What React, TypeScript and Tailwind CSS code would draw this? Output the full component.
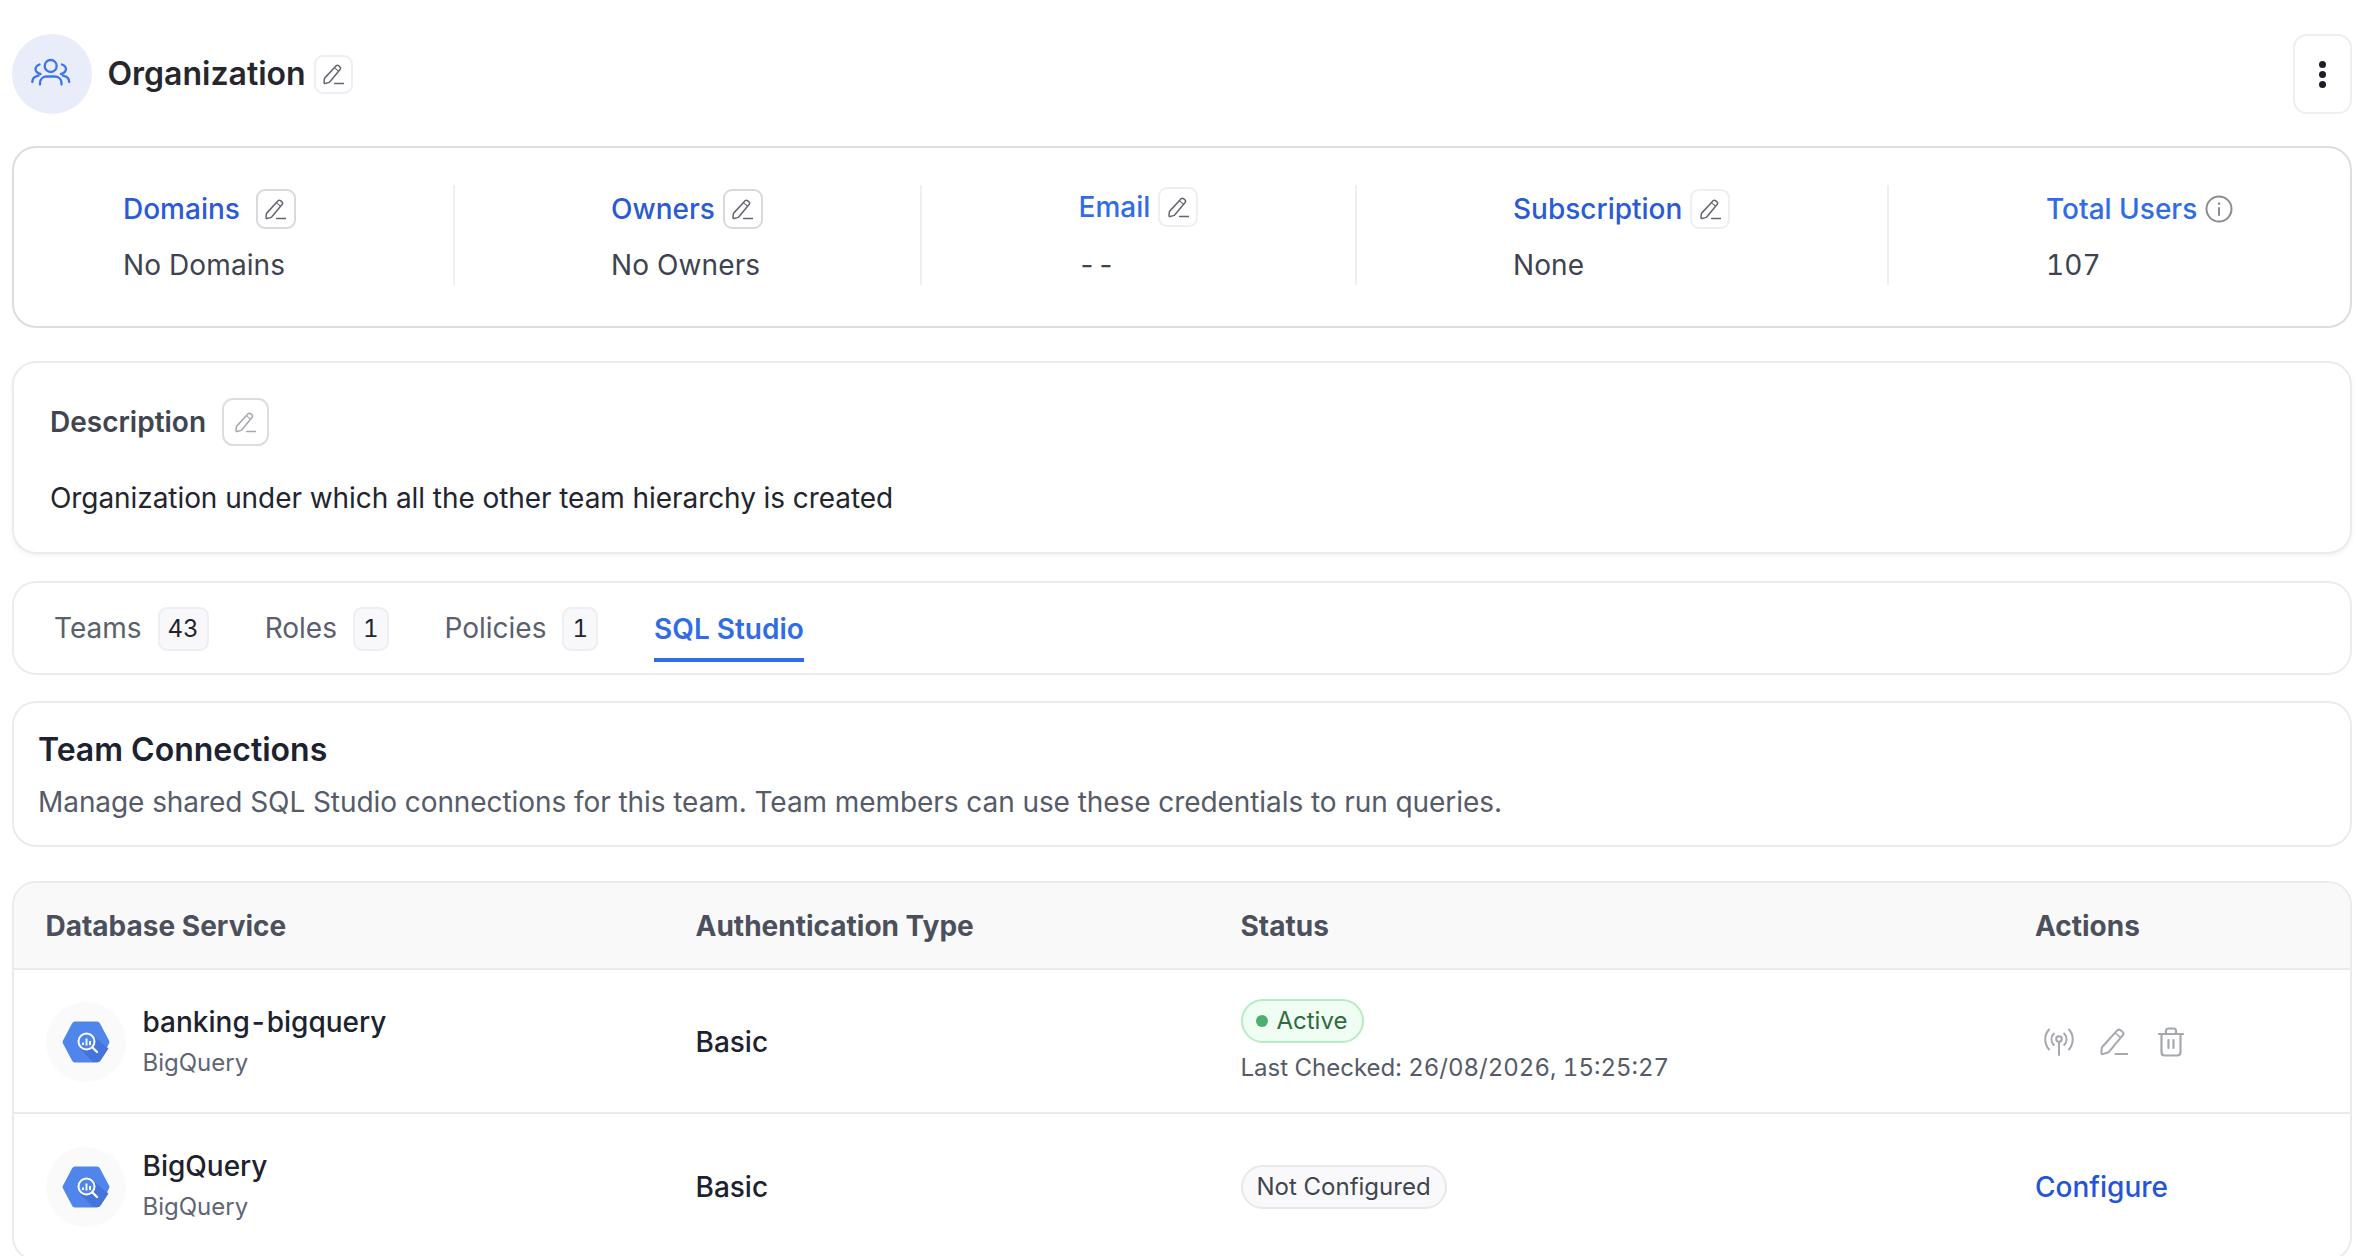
const FONT = "font-['Inter','Liberation_Sans',sans-serif]"

function PencilIcon({ className }: { className?: string }) {
  return (
    <svg viewBox="0 0 28 28" fill="none" stroke="currentColor" strokeWidth="2" strokeLinecap="round" strokeLinejoin="round" className={className}>
      <path d="M17.5 2.2q1.6-1.2 3.1 0l2 1.7q1.5 1.4.4 3L9.2 23.6q-.8.9-1.9 1.2l-4.6 1.3q-1.5.2-1.3-1.3l.3-4.3q.1-1.2.9-2Z" />
      <path d="M15 4.8l5.6 4.8" strokeWidth="1.4" />
      <path d="M15.5 26h12" />
    </svg>
  )
}

function EditButton({ className }: { className: string }) {
  return (
    <div className={`flex items-center justify-center rounded-[9px] border-2 bg-white ${className}`}>
      <PencilIcon className="h-[21px] w-[21px]" />
    </div>
  )
}

function PeopleIcon() {
  return (
    <svg viewBox="0 0 38 26" fill="none" stroke="#3b74ee" strokeWidth="2.300" strokeLinecap="round" className="mb-[4px] mr-[2px] h-[26px] w-[38px] overflow-visible">
      <circle cx="18.700" cy="7" r="6" />
      <path d="M8 25.500v-1.500c0-3.800 3-6.500 7-6.500h7.500c4 0 7 2.700 7 6.500v1.500" />
      <path d="M7.500 5.500C5 6.500 3.500 8.500 3.500 10.300S5.500 14.500 8.500 15" />
      <path d="M30 5.500c2.500 1 4 3 4 4.800S32 14.500 29 15" />
      <path d="M.3 23c0-3 2-5.500 6.200-6.300" />
      <path d="M37.200 23c0-3-2-5.500-6.200-6.300" />
    </svg>
  )
}

function InfoIcon() {
  return (
    <svg viewBox="0 0 28 28" fill="none" stroke="#8b8d93" strokeWidth="2" strokeLinecap="round" className="h-[28px] w-[28px]">
      <circle cx="14" cy="14" r="12.500" />
      <path d="M14 13v7" />
      <path d="M14 8.500v.3" strokeWidth="2.400" />
    </svg>
  )
}

function AntennaIcon() {
  return (
    <svg viewBox="0 0 30 28" fill="none" stroke="#a5a8b0" strokeWidth="2" strokeLinecap="round" className="h-[28px] w-[30px]">
      <circle cx="15" cy="11" r="2.800" />
      <path d="M15 14v13" />
      <path d="M9.800 5.500c-3 3.300-3 8 0 11.500" />
      <path d="M20.200 5.500c3 3.300 3 8 0 11.500" />
      <path d="M5 1.500c-5 5.500-5 14 0 20" />
      <path d="M25 1.500c5 5.500 5 14 0 20" />
    </svg>
  )
}

function TrashIcon() {
  return (
    <svg viewBox="0 0 26 30" fill="none" stroke="#a5a8b0" strokeWidth="2.200" strokeLinecap="round" strokeLinejoin="round" className="h-[30px] w-[26px]">
      <path d="M1 7h24" />
      <path d="M8 7V4q0-2.500 2.500-2.500h5Q18 1.500 18 4v3" />
      <path d="M3.500 7v18q0 3.500 3.500 3.500h12q3.500 0 3.500-3.500V7" />
      <path d="M10.500 13v8M15.500 13v8" />
    </svg>
  )
}

function BigQueryIcon() {
  return (
    <div className="flex h-[80px] w-[80px] shrink-0 items-center justify-center rounded-full bg-[#fafafa]">
      <svg viewBox="0 0 48 42" className="h-[42px] w-[48px]">
        <path d="M1 19.500 10 2.500Q11 .5 13 .5h22q2 0 3 2l9 17q1 1.500 0 3l-9 17q-1 2-3 2H13q-2 0-3-2l-9-17q-1-1.500 0-3Z" fill="#5086ec" />
        <path d="M31 15 46.500 27.500 39 39q-1 2-3 2h-5L18 28Z" fill="#4474db" />
        <circle cx="24.500" cy="20.500" r="8" fill="#5086ec" stroke="#fff" strokeWidth="2" />
        <path d="M30.500 26.500 35 31" stroke="#fff" strokeWidth="2.400" strokeLinecap="round" />
        <path d="M21 21.500v2.500M24.500 17.500v7M28 20v4" stroke="#fff" strokeWidth="1.900" />
      </svg>
    </div>
  )
}

function StatColumn({
  label,
  value,
  width,
  padding,
  edit,
  gap = "gap-[8px]",
  divider = true,
  raised = false,
  labelColor = "text-[#2a5bd7]",
  valueClass = "",
}: {
  label: string
  value: string
  width: string
  padding: string
  edit?: string
  gap?: string
  divider?: boolean
  raised?: boolean
  labelColor?: string
  valueClass?: string
}) {
  return (
    <div className={`h-[100px] shrink-0 ${width} ${padding} ${divider ? "border-r-2 border-[#eeeef3]" : ""}`}>
      <div className={`flex h-[40px] items-center ${gap} ${raised ? "mt-[2px] mb-[18px]" : "mt-[4px] mb-[16px]"}`}>
        <span className={`text-[28px] font-medium leading-[40px] ${labelColor}`}>{label}</span>
        {edit && <EditButton className={`h-[40px] w-[40px] text-[#63666e] ${edit}`} />}
        {label === "Total Users" && <InfoIcon />}
      </div>
      <div className={`text-[28px] leading-[40px] tracking-[0.1px] text-[#3d4350] ${valueClass}`}>{value}</div>
    </div>
  )
}

function TabLabel({ label, count }: { label: string; count: string }) {
  return (
    <div className="flex h-[44px] items-center gap-[16px]">
      <span className="mb-[2px] text-[28px] text-[#5b606c]">{label}</span>
      <span className="flex h-[44px] min-w-[35px] items-center justify-center rounded-[9px] border-2 border-[#eeeef3] bg-[#f8f8fa] px-[8px] text-[24px] tabular-nums text-[#20242e]">
        {count}
      </span>
    </div>
  )
}

const rowClass = "grid grid-cols-[650px_545px_794.500px_1fr] items-center pl-[31.500px]"

export default function App() {
  return (
    <div className={`h-[1256px] overflow-hidden bg-white pl-[12px] pr-[26px] pt-[34px] ${FONT}`}>
      <div className="flex h-[80px] items-center justify-between">
        <div className="flex items-center">
          <div className="flex h-[80px] w-[80px] items-center justify-center rounded-full bg-[#e9edf9]">
            <PeopleIcon />
          </div>
          <h1 className="ml-[15.500px] text-[32px] font-semibold text-[#25272c]">Organization</h1>
          <EditButton className="ml-[8px] h-[39px] w-[39px] border-[#eeeef3] text-[#63666e]" />
        </div>
        <div className="flex h-[80px] w-[59px] flex-col items-center justify-center gap-[3px] rounded-[14px] border-2 border-[#eeeef3]">
          <span className="h-[7px] w-[7px] rounded-full bg-[#1c1f2a]" />
          <span className="h-[7px] w-[7px] rounded-full bg-[#1c1f2a]" />
          <span className="h-[7px] w-[7px] rounded-full bg-[#1c1f2a]" />
        </div>
      </div>

      <div className="mt-[32px] flex h-[182px] rounded-[24px] border-2 border-[#dcdde1] pt-[37px]">
        <StatColumn label="Domains" value="No Domains" width="w-[441px]" padding="pl-[109px]" edit="border-[#d8d9dd]" gap="gap-[16px]" />
        <StatColumn label="Owners" value="No Owners" width="w-[466.500px]" padding="pl-[156px]" edit="border-[#d8d9dd]" />
        <StatColumn label="Email" value="--" width="w-[435.500px]" padding="pl-[157px]" edit="border-[#eeeef3]" raised labelColor="text-[#316ce6]" valueClass="ml-[2px] tracking-[6px]" />
        <StatColumn label="Subscription" value="None" width="w-[532px]" padding="pl-[156px]" edit="border-[#eeeef3]" />
        <StatColumn label="Total Users" value="107" width="w-[460px]" padding="pl-[157px]" divider={false} labelColor="text-[#316ce6]" valueClass="tabular-nums" gap="gap-[8px]" />
      </div>

      <div className="mt-[33px] h-[193px] rounded-[24px] border-2 border-[#ebebee] px-[36px] pt-[35px] shadow-[0_2px_5px_rgba(0,0,0,0.05)]">
        <div className="flex h-[48px] items-center gap-[16px]">
          <span className="text-[28px] font-semibold text-[#40454f]">Description</span>
          <EditButton className="h-[48px] w-[47px] rounded-[11px] border-[#dcdde1] text-[#a5a8b0]" />
        </div>
        <p className="mt-[32px] text-[28px] leading-[40px] tracking-[-0.07px] text-[#22252e]">
          Organization under which all the other team hierarchy is created
        </p>
      </div>

      <div className="mt-[27px] flex h-[94px] items-start gap-[56px] rounded-[24px] border-2 border-[#ebecf2] pl-[40px] pt-[24px]">
        <TabLabel label="Teams" count="43" />
        <TabLabel label="Roles" count="1" />
        <TabLabel label="Policies" count="1" />
        <div className="h-[55px] border-b-4 border-[#316ce6] text-[28px] font-semibold leading-[44px] text-[#316ce6]">SQL Studio</div>
      </div>

      <div className="mt-[26px] h-[146px] rounded-[24px] border-2 border-[#ebebee] pl-[24px] pt-[26.500px]">
        <h2 className="text-[32px] font-semibold leading-[40px] text-[#1d2230]">Team Connections</h2>
        <p className="mt-[12.500px] text-[28px] leading-[40px] tracking-[-0.07px] text-[#555b68]">
          Manage shared SQL Studio connections for this team. Team members can use these credentials to run queries.
        </p>
      </div>

      <div className="mt-[34px] rounded-[24px] border-2 border-[#ebebeb]">
        <div className={`${rowClass} h-[87px] rounded-t-[22px] border-b-2 border-[#ebebeb] bg-[#f9f9fa] text-[28px] font-bold text-[#4b505c]`}>
          <span>Database Service</span>
          <span>Authentication Type</span>
          <span>Status</span>
          <span>Actions</span>
        </div>

        <div className={`${rowClass} h-[144px] border-b-2 border-[#ebebeb] pt-[2px]`}>
          <div className="flex items-center gap-[17px]">
            <BigQueryIcon />
            <div className="pt-[1px]">
              <div className="text-[28px] font-medium leading-[40px] text-[#1d2230]">
                banking<span className="mx-[2px]">-</span>bigquery
              </div>
              <div className="mt-[1px] text-[24px] leading-[40px] text-[#5f6572]">BigQuery</div>
            </div>
          </div>
          <span className="text-[28px] font-medium text-[#1d2230]">Basic</span>
          <div className="pt-[2px]">
            <div className="inline-flex h-[44px] w-[123px] items-center rounded-full border-2 border-[#b5ecc4] bg-[#effdf3] pl-[13px]">
              <span className="h-[12px] w-[12px] rounded-full bg-[#4caf6e]" />
              <span className="ml-[9px] text-[24px] text-[#2f6b3f]">Active</span>
            </div>
            <div className="mt-[5px] text-[24px] leading-[40px] tabular-nums text-[#555b68]">Last Checked: 26/08/2026, 15:25:27</div>
          </div>
          <div className="flex items-center">
            <span className="ml-[9px] flex items-center"><AntennaIcon /></span>
            <span className="ml-[26px] flex items-center text-[#a5a8b0]"><PencilIcon className="h-[28px] w-[28px]" /></span>
            <span className="ml-[30px] flex items-center"><TrashIcon /></span>
          </div>
        </div>

        <div className={`${rowClass} h-[145px]`}>
          <div className="flex items-center gap-[17px]">
            <BigQueryIcon />
            <div>
              <div className="text-[28px] font-medium leading-[40px] text-[#1d2230]">BigQuery</div>
              <div className="mt-[1px] text-[24px] leading-[40px] text-[#5f6572]">BigQuery</div>
            </div>
          </div>
          <span className="text-[28px] font-medium text-[#1d2230]">Basic</span>
          <div>
            <div className="inline-flex h-[44px] items-center rounded-full border-2 border-[#e8e8ea] bg-[#f9f9fb] px-[14px] text-[24px] text-[#3f4451]">
              Not Configured
            </div>
          </div>
          <span className="text-[28px] font-medium text-[#2555d6]">Configure</span>
        </div>
      </div>
    </div>
  )
}
